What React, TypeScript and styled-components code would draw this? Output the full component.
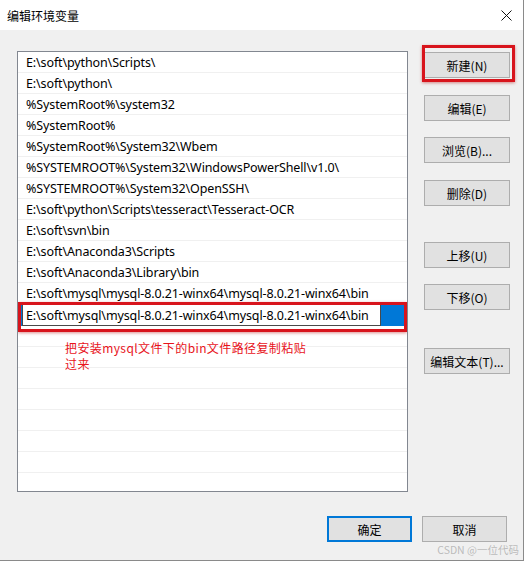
import React from "react";
import styled, { createGlobalStyle } from "styled-components";

const Global = createGlobalStyle`
  html, body { margin: 0; padding: 0; background: #ffffff; }
  * { box-sizing: border-box; }
`;

const UI_FONT = `"Noto Sans", "Noto Sans CJK SC", sans-serif`;

const Window = styled.div`
  position: relative;
  width: 524px;
  height: 561px;
  background: #f0f0f0;
  border-right: 1px solid #8a8a8a;
  border-bottom: 1px solid #8a8a8a;
  display: flex;
  flex-direction: column;
  font-family: ${UI_FONT};
  font-size: 12px;
  color: #000;
`;

const TitleBar = styled.div`
  height: 30px;
  background: #ffffff;
  display: flex;
  align-items: center;
  justify-content: space-between;
  padding: 0 11px 0 7px;
  flex: none;
`;

const Title = styled.span`
  font-family: "Noto Sans CJK SC", sans-serif;
  font-size: 12px;
  color: #000;
`;

const Body = styled.div`
  display: flex;
  padding: 21px 0 0 17px;
  gap: 16px;
`;

const ListBox = styled.div`
  position: relative;
  width: 391px;
  height: 441px;
  background: #ffffff;
  border: 1px solid #828790;
  overflow: hidden;
`;

const Row = styled.div`
  height: 21px;
  display: flex;
  align-items: center;
  padding-left: 8px;
  border-bottom: 1px solid #f0f0f0;
  white-space: nowrap;
  font-size: 12.5px;
  letter-spacing: -0.12px;
`;

const EditRow = styled.div`
  position: relative;
  height: 22px;
  padding: 1px 3px 0 2px;
`;

const Highlight = styled.div`
  height: 21px;
  background: #0078d7;
  display: flex;
  padding-left: 2px;
`;

const EditInput = styled.div`
  width: 359px;
  height: 22px;
  margin-top: -1px;
  background: #ffffff;
  border: 1px solid #4a4a4a;
  display: flex;
  align-items: center;
  padding-left: 3px;
  white-space: nowrap;
  font-size: 12.5px;
  letter-spacing: -0.12px;
`;

const RedFrame = styled.div<{ $t: number; $r: number; $b: number; $l: number }>`
  position: absolute;
  top: ${(p) => p.$t}px;
  right: ${(p) => p.$r}px;
  bottom: ${(p) => p.$b}px;
  left: ${(p) => p.$l}px;
  border: 3px solid #d8141c;
  box-shadow: 0 1px 3px rgba(180, 0, 0, 0.45);
  pointer-events: none;
`;

const Annotation = styled.div`
  position: absolute;
  top: 288px;
  left: 47px;
  color: #e8131b;
  font-family: "Noto Sans CJK SC", sans-serif;
  font-size: 12px;
  line-height: 16px;
  letter-spacing: 0.4px;
  width: 300px;
`;

const ButtonColumn = styled.div`
  display: flex;
  flex-direction: column;
  width: 86px;
  padding-top: 1px;
`;

const Button = styled.div<{ $mt?: number; $primary?: boolean; $w?: number }>`
  position: relative;
  width: ${(p) => p.$w ?? 86}px;
  height: 26px;
  margin-top: ${(p) => p.$mt ?? 0}px;
  background: #e1e1e1;
  border: ${(p) => (p.$primary ? "2px solid #0078d7" : "1px solid #adadad")};
  display: flex;
  align-items: center;
  justify-content: center;
  font-family: "Noto Sans CJK SC", sans-serif;
  font-size: 12px;
  color: #000;
  flex: none;
`;

const Footer = styled.div`
  display: flex;
  justify-content: flex-end;
  gap: 10px;
  padding-right: 16px;
  margin-top: 24px;
`;

const Watermark = styled.div`
  position: absolute;
  right: 4px;
  bottom: 3px;
  font-family: "Noto Sans CJK SC", sans-serif;
  font-size: 10.5px;
  color: rgba(150, 150, 150, 0.6);
`;

const CloseIcon = () => (
  <svg width="11" height="11" viewBox="0 0 11 11">
    <path d="M0.5 0.5 L10.5 10.5 M10.5 0.5 L0.5 10.5" stroke="#111" strokeWidth="1" fill="none" />
  </svg>
);

const paths = [
  "E:\\soft\\python\\Scripts\\",
  "E:\\soft\\python\\",
  "%SystemRoot%\\system32",
  "%SystemRoot%",
  "%SystemRoot%\\System32\\Wbem",
  "%SYSTEMROOT%\\System32\\WindowsPowerShell\\v1.0\\",
  "%SYSTEMROOT%\\System32\\OpenSSH\\",
  "E:\\soft\\python\\Scripts\\tesseract\\Tesseract-OCR",
  "E:\\soft\\svn\\bin",
  "E:\\soft\\Anaconda3\\Scripts",
  "E:\\soft\\Anaconda3\\Library\\bin",
  "E:\\soft\\mysql\\mysql-8.0.21-winx64\\mysql-8.0.21-winx64\\bin",
];

export default function App() {
  return (
    <>
      <Global />
      <Window>
        <TitleBar>
          <Title>编辑环境变量</Title>
          <CloseIcon />
        </TitleBar>
        <Body>
          <ListBox>
            {paths.map((p) => (
              <Row key={p}>{p}</Row>
            ))}
            <EditRow>
              <Highlight>
                <EditInput>E:\soft\mysql\mysql-8.0.21-winx64\mysql-8.0.21-winx64\bin</EditInput>
              </Highlight>
              <RedFrame $t={-2} $r={0} $b={-6} $l={0} />
            </EditRow>
            {Array.from({ length: 7 }).map((_, i) => (
              <Row key={`e${i}`} />
            ))}
            <Annotation>
              把安装mysql文件下的bin文件路径复制粘贴
              <br />
              过来
            </Annotation>
          </ListBox>
          <ButtonColumn>
            <Button>
              新建(N)
              <RedFrame $t={-8} $r={-6} $b={-5} $l={-3} />
            </Button>
            <Button $mt={17}>编辑(E)</Button>
            <Button $mt={16}>浏览(B)...</Button>
            <Button $mt={17}>删除(D)</Button>
            <Button $mt={36}>上移(U)</Button>
            <Button $mt={16}>下移(O)</Button>
            <Button $mt={38}>编辑文本(T)...</Button>
          </ButtonColumn>
        </Body>
        <Footer>
          <Button $primary $w={85}>确定</Button>
          <Button $w={85}>取消</Button>
        </Footer>
        <Watermark>CSDN @一位代码</Watermark>
      </Window>
    </>
  );
}
